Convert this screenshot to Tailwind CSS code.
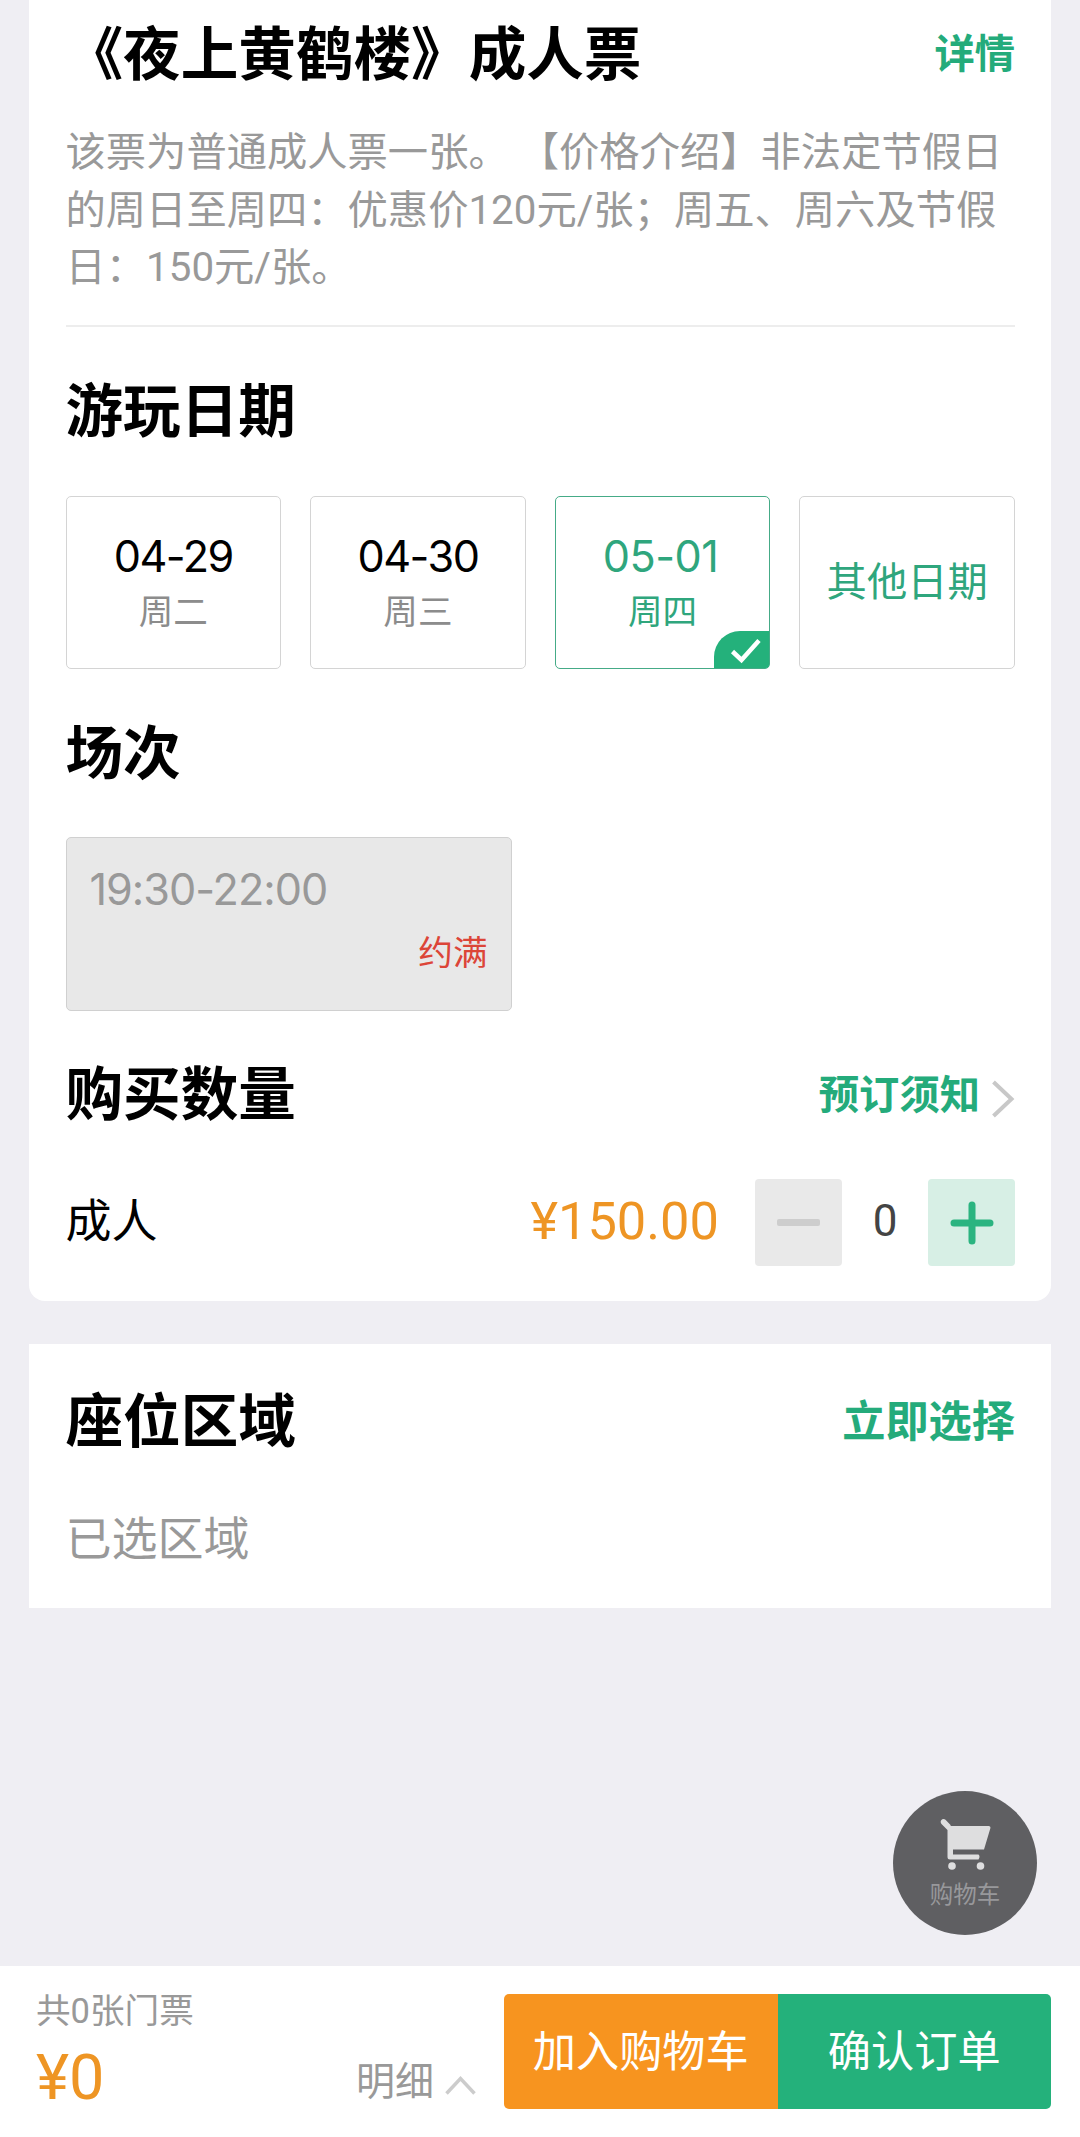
<!DOCTYPE html>
<html lang="zh-CN">
<head>
<meta charset="utf-8">
<title>订单</title>
<script src="https://cdn.jsdelivr.net/npm/@tailwindcss/browser@4"></script>
</head>
<body class="bg-[#efeef3] font-[Roboto,'Noto_Sans_CJK_SC',sans-serif] text-black">
<div class="relative flex h-[2137px] w-[1080px] flex-col overflow-hidden">
  <!-- ticket -->
  <section class="mx-[29px] flex h-[1301px] shrink-0 flex-col rounded-b-[16px] bg-white pr-9 pl-[36.5px]">
    <div class="flex h-[108px] shrink-0 items-center justify-between pt-[2px]">
      <h1 class="pt-[2px] text-[57.6px] leading-none font-bold">《夜上黄鹤楼》成人票</h1>
      <a class="text-[40.3px] leading-none font-bold text-[#24ab7b]">详情</a>
    </div>
    <p class="mt-[16px] h-[201px] shrink-0 text-[40.3px] leading-[57.5px] text-[#999]">该票为普通成人票一张。 【价格介绍】非法定节假日的周日至周四：优惠价120元/张；周五、周六及节假日：150元/张。</p>
    <div class="h-[2px] shrink-0 bg-[#ededed]"></div>
    <h2 class="mt-[57px] h-[58px] shrink-0 text-[57.6px] leading-[58px] font-bold">游玩日期</h2>
    <div class="mt-[54px] grid h-[173px] shrink-0 grid-cols-4 gap-[29px]">
      <div class="flex flex-col items-center rounded-[5px] border-[1.5px] border-[#d4d4d4] pt-[34px]">
        <span class="font-[Inter] text-[43.2px] leading-[50px] tracking-[-1.5px]">04-29</span>
        <span class="mt-[7px] text-[34.6px] leading-[48px] text-[#8c8c8c]">周二</span>
      </div>
      <div class="flex flex-col items-center rounded-[5px] border-[1.5px] border-[#d4d4d4] pt-[34px]">
        <span class="font-[Inter] text-[43.2px] leading-[50px] tracking-[-1.5px]">04-30</span>
        <span class="mt-[7px] text-[34.6px] leading-[48px] text-[#8c8c8c]">周三</span>
      </div>
      <div class="relative flex flex-col items-center rounded-[5px] border-[1.5px] border-[#45ab87] pt-[34px] text-[#2fa67d]">
        <span class="pr-[4px] font-[Inter] text-[43.2px] leading-[50px] tracking-[-0.5px]">05-01</span>
        <span class="mt-[7px] text-[34.6px] leading-[48px]">周四</span>
        <span class="absolute right-0 bottom-0 flex h-[37px] w-[55px] rounded-tl-[26px] rounded-br-[3px] bg-[#24b17b]">
          <svg class="h-[37px] w-[55px]" viewBox="0 0 55 37" fill="none" stroke="#fff" stroke-width="4.5"><path d="M18.5 20.5 L27.5 29 L45 9.500"/></svg>
        </span>
      </div>
      <div class="flex items-center justify-center rounded-[5px] border-[1.5px] border-[#d4d4d4] pt-[2px] text-[40.3px] leading-none text-[#2fa67d]">其他日期</div>
    </div>
    <h2 class="mt-[57px] h-[58px] shrink-0 text-[57.6px] leading-[58px] font-bold">场次</h2>
    <div class="mt-[53px] flex h-[174px] w-[446px] shrink-0 flex-col rounded-[5px] border-[1.5px] border-[#d0d0d0] bg-[#e8e8e8] px-[23px] pt-[26px]">
      <span class="font-[Inter] text-[43.2px] leading-[50px] tracking-[-1px] text-[#999]">19:30-22:00</span>
      <span class="mt-[15px] self-end text-[34.6px] leading-[48px] text-[#dc4538]">约满</span>
    </div>
    <div class="mt-[56px] flex h-[58px] shrink-0 items-center justify-between">
      <h2 class="text-[57.6px] leading-[58px] font-bold">购买数量</h2>
      <a class="flex items-center gap-[11px] text-[40.3px] leading-[58px] font-bold text-[#24ab7b]">预订须知
        <svg class="mt-[5px] h-[40px] w-[24px]" viewBox="0 0 24 40" fill="none" stroke="#c8c8c8" stroke-width="4"><path d="M2.500 3 L20.500 20 L2.500 37"/></svg>
      </a>
    </div>
    <div class="mt-[54px] flex h-[87px] shrink-0 items-center">
      <span class="pb-[3px] text-[46px] leading-[60px]">成人</span>
      <span class="ml-auto pb-[4px] text-[52.4px] leading-[60px] text-[#ee9524]">¥150.00</span>
      <span class="ml-[36px] flex h-[87px] w-[87px] items-center justify-center rounded-[4px] bg-[#e9e9e9]"><span class="h-[7px] w-[43px] rounded-[2px] bg-[#cdcdcd]"></span></span>
      <span class="w-[86px] pb-[3px] text-center text-[44px] leading-[60px] text-[#444]">0</span>
      <span class="flex h-[87px] w-[87px] items-center justify-center rounded-[4px] bg-[#d7efe5]">
        <svg class="h-[44px] w-[44px]" viewBox="0 0 44 44" fill="none" stroke="#2bb480" stroke-width="7" stroke-linecap="round"><path d="M4 22 H40 M22 4 V40"/></svg>
      </span>
    </div>
  </section>

  <!-- seat area -->
  <section class="mx-[29px] mt-[43px] flex h-[264px] shrink-0 flex-col bg-white pt-[50px] pr-9 pl-[36.5px]">
    <div class="flex h-[58px] items-center justify-between">
      <h2 class="text-[57.6px] leading-[58px] font-bold">座位区域</h2>
      <a class="text-[43.2px] leading-[58px] font-bold text-[#24ab7b]">立即选择</a>
    </div>
    <p class="mt-[57px] text-[46px] leading-[60px] text-[#999]">已选区域</p>
  </section>

  <!-- floating cart -->
  <div class="absolute top-[1791px] left-[893px] flex h-[144px] w-[144px] flex-col items-center rounded-full bg-[#5f5f62] pt-[26px]">
    <svg class="h-[54px] w-[54px]" viewBox="0 0 54 54" fill="#dededf">
      <path d="M12 9 H50.500 Q53 9 52.300 11.500 L46 32.500 H15 V37.500 H40.500 Q42.500 39.500 40.500 42.500 H12 Q9.500 42.500 9.500 40 V13 L3.500 7 Q1.500 4 4.300 2.200 Q6 1.400 7.500 2.800 L13 8.500Z"/>
      <circle cx="14" cy="49" r="3.800"/><circle cx="42.500" cy="49" r="3.800"/>
    </svg>
    <span class="mt-[9px] text-[23.5px] leading-[30px] text-[#98989b]">购物车</span>
  </div>

  <!-- checkout bar -->
  <footer class="mt-auto flex h-[171px] shrink-0 bg-white pr-[29px] pl-[36px]">
    <div class="flex flex-col pt-[24px]">
      <span class="text-[34.6px] leading-[42px] text-[#999]">共0张门票</span>
      <span class="mt-[14px] text-[63px] leading-[64px] text-[#ee9524]">¥0</span>
    </div>
    <div class="mt-[86px] mr-[28px] ml-auto flex h-[60px] items-center gap-[11px] text-[#999]">
      <span class="text-[39px] leading-[60px]">明细</span>
      <svg class="mt-[6px] h-[20px] w-[31px]" viewBox="0 0 31 20" fill="none" stroke="#ccc" stroke-width="3.500"><path d="M1.500 18.500 L15.500 3.500 L29.500 18.500"/></svg>
    </div>
    <div class="mt-[28px] flex h-[115px] w-[547px] overflow-hidden rounded-[5px] text-[43.2px] leading-none text-white">
      <button class="flex flex-1 items-center justify-center bg-[#f7941f] pt-[2px]">加入购物车</button>
      <button class="flex flex-1 items-center justify-center bg-[#24b17b] pt-[2px]">确认订单</button>
    </div>
  </footer>
</div>
</body>
</html>
